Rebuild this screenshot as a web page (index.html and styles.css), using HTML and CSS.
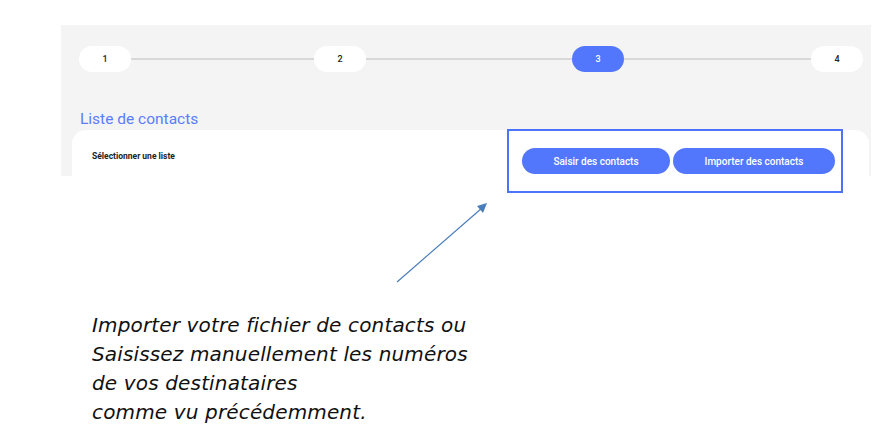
FILE: index.html
```html
<!DOCTYPE html>
<html lang="fr">
<head>
<meta charset="utf-8">
<title>Liste de contacts</title>
<link rel="stylesheet" href="styles.css">
</head>
<body>
<div class="page">
  <section class="panel">
    <div class="stepper">
      <span class="step">1</span>
      <span class="line l1"></span>
      <span class="step">2</span>
      <span class="line l2"></span>
      <span class="step active">3</span>
      <span class="line l3"></span>
      <span class="step">4</span>
    </div>
    <h2 class="title">Liste de contacts</h2>
    <div class="card">
      <div class="label">Sélectionner une liste</div>
      <div class="actions">
        <button class="btn btn-saisir">Saisir des contacts</button>
        <button class="btn btn-importer">Importer des contacts</button>
      </div>
    </div>
  </section>

  <div class="highlight"></div>

  <svg class="arrow" width="104" height="92" viewBox="0 0 104 92">
    <line x1="7" y1="86" x2="92" y2="12" stroke="#4a7ebb" stroke-width="1.2"/>
    <polygon points="97,7 87,10 93,17" fill="#4a7ebb"/>
  </svg>

  <p class="note">Importer votre fichier de contacts ou<br>Saisissez manuellement les numéros<br>de vos destinataires<br>comme vu précédemment.</p>
</div>
</body>
</html>
```

FILE: styles.css
```css
* { box-sizing: border-box; }
html, body { margin: 0; padding: 0; background: #ffffff; }
body { font-family: Roboto, "Liberation Sans", sans-serif; }

.page {
  position: relative;
  width: 887px;
  height: 432px;
  overflow: hidden;
  padding-top: 25px;
}

.panel {
  margin-left: 61px;
  width: 810px;
  height: 151px;
  background: #f4f4f4;
  overflow: hidden;
}

.stepper {
  display: flex;
  align-items: center;
  padding-top: 21px;
  padding-left: 18px;
}

.step {
  width: 52px;
  height: 26px;
  border-radius: 13px;
  background: #ffffff;
  color: #222;
  font-size: 9px;
  font-weight: 500;
  display: flex;
  align-items: center;
  justify-content: center;
  flex: none;
}
.step.active { background: #5277fd; color: #ffffff; }

.line { height: 2px; background: #d8d8d8; flex: none; }
.l1 { width: 183px; }
.l2 { width: 206px; }
.l3 { width: 187px; }

.title {
  margin: 36px 0 0 19px;
  font-size: 15.5px;
  font-weight: 400;
  line-height: 22px;
  color: #5b7cfb;
}

.card {
  margin: 0 0 0 11px;
  width: 797px;
  height: 80px;
  background: #ffffff;
  border-radius: 14px 14px 0 0;
  display: flex;
  justify-content: space-between;
  align-items: flex-start;
  padding: 18px 34px 0 20px;
}

.label {
  font-size: 8.5px;
  font-weight: 700;
  color: #222;
  padding-top: 3px;
}

.actions { display: flex; gap: 3px; }

.btn {
  height: 26px;
  border: none;
  border-radius: 13px;
  background: #5277fd;
  color: #ffffff;
  font-family: Roboto, "Liberation Sans", sans-serif;
  font-size: 10px;
  font-weight: 500;
  padding: 0;
}
.btn-saisir { width: 148px; }
.btn-importer { width: 162px; }

.highlight {
  position: absolute;
  left: 507px;
  top: 129px;
  width: 336px;
  height: 64px;
  border: 2.5px solid #4b74fb;
}

.arrow {
  position: absolute;
  left: 390px;
  top: 196px;
}

.note {
  margin: 135px 0 0 92px;
  font-family: "DejaVu Sans", Inter, sans-serif;
  font-style: italic;
  font-size: 20px;
  letter-spacing: 0.15px;
  line-height: 29px;
  color: #111;
}
```
